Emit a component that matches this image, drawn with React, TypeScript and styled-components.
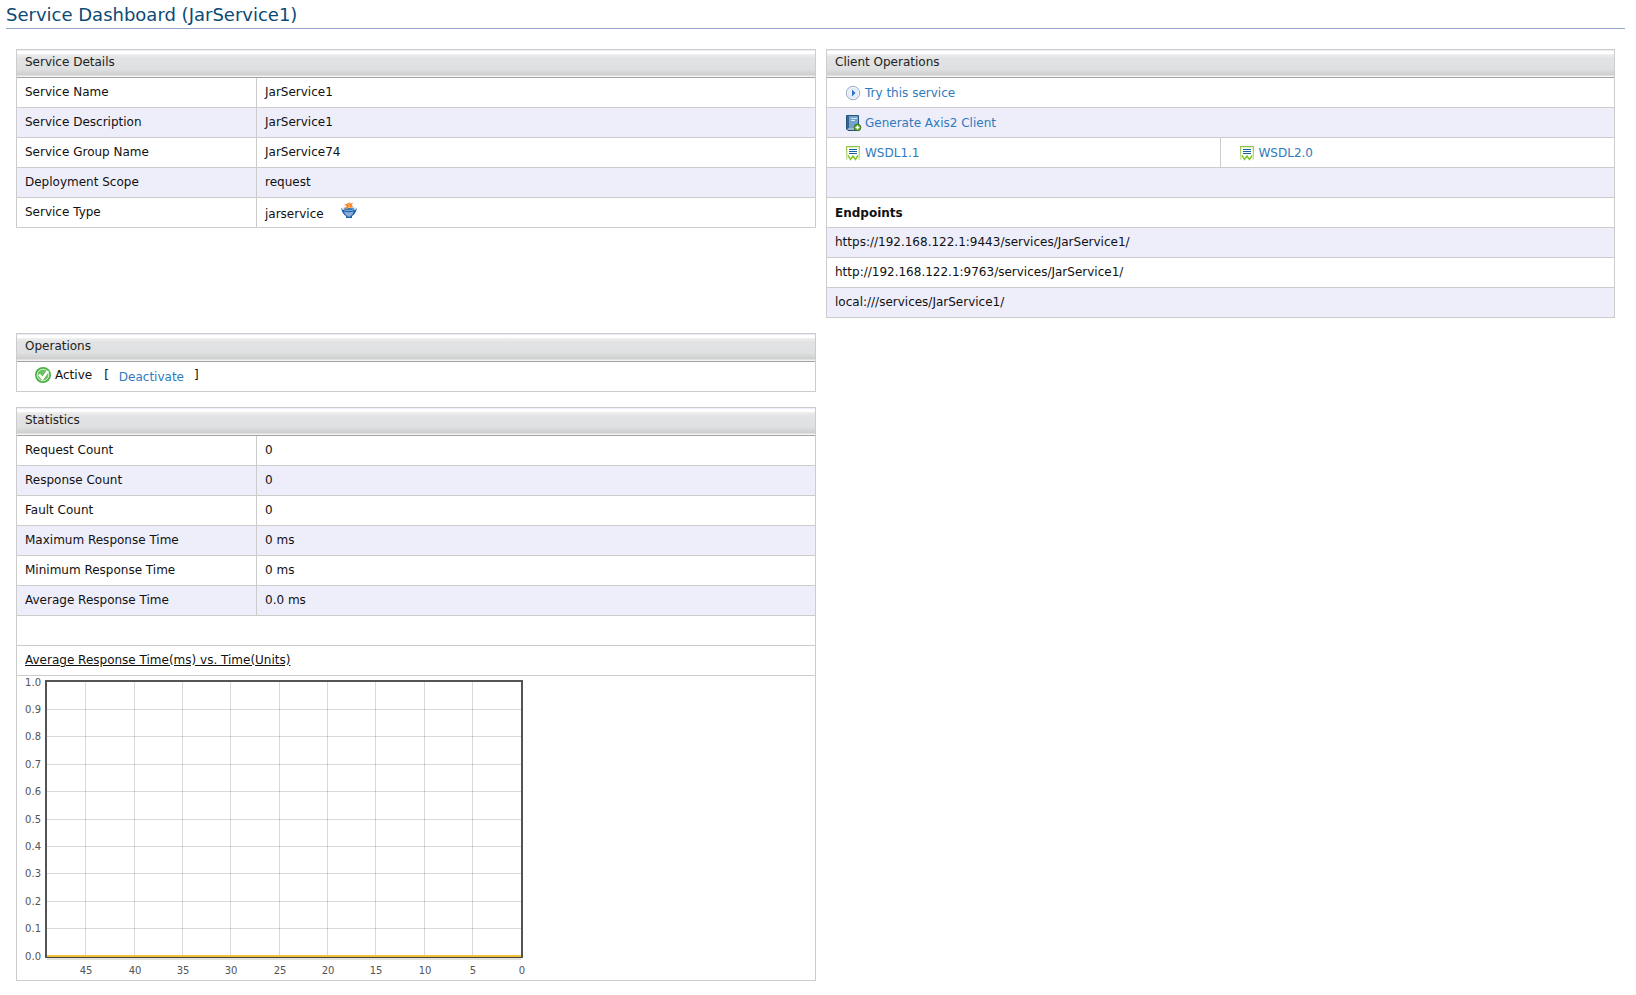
import React from "react";
import styled, { createGlobalStyle } from "styled-components";

const GlobalStyle = createGlobalStyle`
  body {
    margin: 0;
    background: #fff;
    color: #111;
    font-family: "DejaVu Sans", Verdana, sans-serif;
    font-size: 12px;
    line-height: 16px;
  }
`;

const Page = styled.main`
  padding: 0 11px 16px 6px;
`;

const Title = styled.h1`
  margin: 0;
  padding: 5px 0 3px;
  border-bottom: 1px solid #94a6cd;
  color: #0b4a75;
  font-size: 18px;
  font-weight: normal;
  line-height: 20px;
`;

const Dashboard = styled.div`
  display: grid;
  grid-template-columns: 800fr 789fr;
  gap: 15px 10px;
  align-items: start;
  padding: 20px 10px 0;
`;

const Table = styled.table`
  width: 100%;
  table-layout: fixed;
  border: 1px solid #ccc;
  border-bottom: 0;
  border-spacing: 0;
`;

const HeadCell = styled.th`
  box-sizing: border-box;
  height: 28px;
  padding: 4px 8px 0;
  border-bottom: 1px solid #a2a3a5;
  background: linear-gradient(
    #eeeef9 0 1px,
    #fff 1px 4px,
    #f0f0f0 4px,
    #e2e3e4 8px,
    #dfe0e1 19px,
    #cecece 25px,
    #f4f4f4 26px
  );
  color: #222;
  font-weight: normal;
  text-align: left;
  vertical-align: top;
`;

const Row = styled.tr<{ $shaded?: boolean }>`
  background: ${(p) => (p.$shaded ? "#eeeefb" : "#fff")};
`;

const Cell = styled.td<{ $indent?: boolean }>`
  box-sizing: border-box;
  height: 30px;
  padding: ${(p) => (p.$indent ? "7px 19px 0" : "6px 8px 0")};
  border-bottom: 1px solid #ccc;
  vertical-align: top;

  &:not(:last-child) {
    border-right: 1px solid #ccc;
  }
`;

const LabelCol = styled.col`
  width: 240px;
`;

const Endpoints = styled.strong`
  display: block;
  padding-top: 1px;
`;

const ChartCell = styled(Cell)`
  height: 305px;
  padding: 0 8px;
`;

const ChartCaption = styled.span`
  text-decoration: underline;
`;

const Inline = styled.div<{ $gap: number }>`
  display: flex;
  align-items: flex-start;
  gap: ${(p) => p.$gap}px;
`;

const TypeCell = styled(Cell)`
  padding-top: 4px;
`;

const TypeName = styled.span`
  padding-top: 4px;
`;

const Link = styled.a`
  display: inline-flex;
  align-items: center;
  gap: 3px;
  color: #2f7abd;
  text-decoration: none;
`;

const Status = styled.span`
  display: inline-flex;
  align-items: center;
  gap: 4px;
  padding-right: 2px;
`;

const OperationsCell = styled(Cell)`
  padding: 5px 18px 0;
`;

const Toggle = styled(Link)`
  padding-top: 2px;
`;

const Icon = styled.svg`
  display: block;
  flex: none;
`;

const TickText = styled.text`
  fill: #545454;
  font-size: 10px;
`;

const TryIcon = () => (
  <Icon width="16" height="16" viewBox="0 0 16 16" aria-hidden="true">
    <defs>
      <radialGradient id="ball">
        <stop offset="0" stopColor="#fff" />
        <stop offset="1" stopColor="#d3e0f1" />
      </radialGradient>
    </defs>
    <circle cx="7" cy="8" r="6.700" fill="url(#ball)" stroke="#9aaac4" />
    <circle cx="7" cy="8" r="5.600" fill="none" stroke="#f4f8fd" />
    <path d="M6 4.500 9.500 8 6 11.500Z" fill="#2b6fc9" />
  </Icon>
);

const ClientIcon = () => (
  <Icon width="16" height="16" viewBox="0 0 16 16" aria-hidden="true">
    <path d="M.5.5h12v15H2L.5 14Z" fill="#5f8cb5" stroke="#25527c" />
    <path d="M1 1h2v12.500h-2Z" fill="#356591" />
    <path d="M3 1h9v12H3Z" fill="#75a2c8" />
    <path d="M5 3.500h6M5 5.500h4" stroke="#d5e6f4" />
    <path d="M2 14h10" stroke="#dce6ed" />
    <circle cx="11.500" cy="12.500" r="3.300" fill="#63a436" stroke="#397318" />
    <path d="M11.500 10.500v4M9.500 12.500h4" stroke="#fff" strokeWidth="1.400" />
  </Icon>
);

const WsdlIcon = () => (
  <Icon width="16" height="16" viewBox="0 0 16 16" aria-hidden="true">
    <defs>
      <linearGradient id="sheet" x2="0" y2="1">
        <stop offset="0" stopColor="#8dbf4a" />
        <stop offset="1" stopColor="#d9ecb8" />
      </linearGradient>
    </defs>
    <path d="M0 1h14v14h-2V3H2v12H0Z" fill="#e5f2c3" />
    <path d="M.5 15V1.500h13V15" fill="none" stroke="url(#sheet)" />
    <path d="M3 4.500h8M3 6.500h8M3 8.500h8" stroke="#1363a8" strokeWidth="1.200" />
    <path d="m2 10.500 2.500 4L7 11l2.500 3.500 2.500-4" fill="none" stroke="#85c52e" strokeWidth="1.500" />
  </Icon>
);

const BowlIcon = () => (
  <Icon width="16" height="16" viewBox="0 0 16 16" aria-hidden="true">
    <path d="M0 6.500Q8 4 16 6.500L14.500 10.500Q13 13 11 14v2H5v-2Q3 13 1.500 10.500Z" fill="#1d64ad" />
    <ellipse cx="8" cy="6.800" rx="7.500" ry="1.800" fill="#dcecf8" />
    <ellipse cx="8" cy="7" rx="5.500" ry="1.100" fill="#3377b8" />
    <path d="M3 9.500q5 1.300 9.500 0-.7 3.500-4.500 5.500-4-2-5-5.500Z" fill="#8eabd8" />
    <path d="M3.500 6.500 6 4 3 3l3.500-1.500L9 0l-.5 1.500L12 1l-1.500 2 2 1.500L10 5l1 1.500L8 5 6.500 7Z" fill="#f58220" />
    <path d="M7 2 9 3.500 7 5.500" fill="none" stroke="#ffc27c" />
  </Icon>
);

const ActiveIcon = () => (
  <Icon width="16" height="16" viewBox="0 0 16 16" aria-hidden="true">
    <circle cx="8" cy="8" r="8" fill="#4bb244" />
    <circle cx="8" cy="8" r="5.800" fill="#69c161" stroke="#d7f0d3" />
    <path d="M4 7.500 7.500 11.500 13 4" fill="none" stroke="#fff" strokeWidth="2.600" />
  </Icon>
);

const Header = ({ children, span = 2 }: { children: React.ReactNode; span?: number }) => (
  <thead>
    <tr>
      <HeadCell colSpan={span}>{children}</HeadCell>
    </tr>
  </thead>
);

const Columns = () => (
  <colgroup>
    <LabelCol />
    <col />
  </colgroup>
);

const details = [
  ["Service Name", "JarService1"],
  ["Service Description", "JarService1"],
  ["Service Group Name", "JarService74"],
  ["Deployment Scope", "request"],
];

const statistics = [
  ["Request Count", "0"],
  ["Response Count", "0"],
  ["Fault Count", "0"],
  ["Maximum Response Time", "0 ms"],
  ["Minimum Response Time", "0 ms"],
  ["Average Response Time", "0.0 ms"],
];

const endpoints = [
  "https://192.168.122.1:9443/services/JarService1/",
  "http://192.168.122.1:9763/services/JarService1/",
  "local:///services/JarService1/",
];

const DataRows = ({ rows }: { rows: string[][] }) => (
  <>
    {rows.map(([label, value], i) => (
      <Row key={label} $shaded={i % 2 === 1}>
        <Cell>{label}</Cell>
        <Cell>{value}</Cell>
      </Row>
    ))}
  </>
);

const PLOT = { left: 22, right: 496, top: 6, bottom: 280 };

const ResponseChart = () => {
  const xTicks = [0, 5, 10, 15, 20, 25, 30, 35, 40, 45].map((v) => ({
    v,
    x: Math.floor(PLOT.right - (v * (PLOT.right - PLOT.left)) / 49),
  }));
  const yTicks = Array.from({ length: 11 }, (_, i) => ({
    v: (i / 10).toFixed(1),
    y: Math.floor(PLOT.bottom - (i * (PLOT.bottom - PLOT.top)) / 10),
  }));
  return (
    <Icon width="500" height="304" viewBox="0 0 500 304" role="img" aria-label="Average response time over time">
      <g stroke="#545454" strokeOpacity="0.22">
        {xTicks.slice(1).map(({ v, x }) => (
          <path key={v} d={`M${x + 0.5} 6V280`} />
        ))}
        {yTicks.slice(1, 10).map(({ v, y }) => (
          <path key={v} d={`M22 ${y + 0.5}H496`} />
        ))}
      </g>
      <path d="M22 283H496" stroke="#e2e2e2" strokeWidth="2" />
      <rect x="21" y="5" width="476" height="276" fill="none" stroke="#545454" strokeWidth="2" />
      <path d="M22 280H496" stroke="#edc240" strokeWidth="2" />
      <path d="M22 281.5H496" stroke="#494436" />
      {yTicks.map(({ v, y }) => (
        <TickText key={v} x="16" y={y + 4} textAnchor="end">
          {v}
        </TickText>
      ))}
      {xTicks.map(({ v, x }) => (
        <TickText key={v} x={x + 1} y="298" textAnchor="middle">
          {v}
        </TickText>
      ))}
    </Icon>
  );
};

export default function App() {
  return (
    <>
      <GlobalStyle />
      <Page>
        <Title>Service Dashboard (JarService1)</Title>
        <Dashboard>
          <Table>
            <Columns />
            <Header>Service Details</Header>
            <tbody>
              <DataRows rows={details} />
              <Row>
                <Cell>Service Type</Cell>
                <TypeCell>
                  <Inline $gap={17}>
                    <TypeName>jarservice</TypeName>
                    <BowlIcon />
                  </Inline>
                </TypeCell>
              </Row>
            </tbody>
          </Table>

          <Table>
            <Header>Client Operations</Header>
            <tbody>
              <Row>
                <Cell colSpan={2} $indent>
                  <Link href="#try"><TryIcon />Try this service</Link>
                </Cell>
              </Row>
              <Row $shaded>
                <Cell colSpan={2} $indent>
                  <Link href="#client"><ClientIcon />Generate Axis2 Client</Link>
                </Cell>
              </Row>
              <Row>
                <Cell $indent>
                  <Link href="#wsdl1"><WsdlIcon />WSDL1.1</Link>
                </Cell>
                <Cell $indent>
                  <Link href="#wsdl2"><WsdlIcon />WSDL2.0</Link>
                </Cell>
              </Row>
              <Row $shaded>
                <Cell colSpan={2} />
              </Row>
              <Row>
                <Cell colSpan={2}><Endpoints>Endpoints</Endpoints></Cell>
              </Row>
              {endpoints.map((url, i) => (
                <Row key={url} $shaded={i % 2 === 0}>
                  <Cell colSpan={2}>{url}</Cell>
                </Row>
              ))}
            </tbody>
          </Table>

          <Table>
            <Header span={1}>Operations</Header>
            <tbody>
              <Row>
                <OperationsCell>
                  <Inline $gap={10}>
                    <Status><ActiveIcon />Active</Status>
                    <span>[</span>
                    <Toggle href="#deactivate">Deactivate</Toggle>
                    <span>]</span>
                  </Inline>
                </OperationsCell>
              </Row>
            </tbody>
          </Table>
          <div />

          <Table>
            <Columns />
            <Header>Statistics</Header>
            <tbody>
              <DataRows rows={statistics} />
              <Row>
                <Cell colSpan={2} />
              </Row>
              <Row>
                <Cell colSpan={2}><ChartCaption>Average Response Time(ms) vs. Time(Units)</ChartCaption></Cell>
              </Row>
              <Row>
                <ChartCell colSpan={2}><ResponseChart /></ChartCell>
              </Row>
            </tbody>
          </Table>
        </Dashboard>
      </Page>
    </>
  );
}
